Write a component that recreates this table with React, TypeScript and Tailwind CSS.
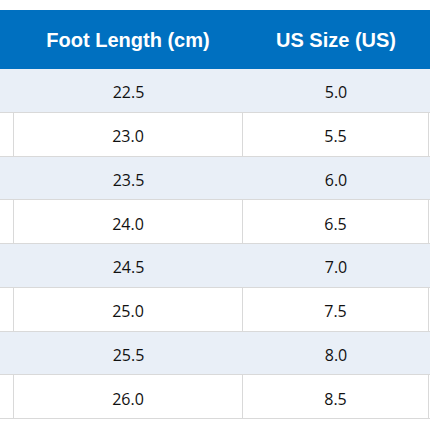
import React from "react";

const rows = [
  ["22.5", "5.0"],
  ["23.0", "5.5"],
  ["23.5", "6.0"],
  ["24.0", "6.5"],
  ["24.5", "7.0"],
  ["25.0", "7.5"],
  ["25.5", "8.0"],
  ["26.0", "8.5"],
];

export default function App() {
  return (
    <div className="w-[430px] h-[430px] bg-white overflow-hidden pt-[10px]">
      <div className="flex h-[59px] bg-[#0070c0] text-white font-bold text-[20px] font-['Liberation_Sans',Arial,sans-serif]">
        <div className="w-[13px]" />
        <div className="w-[230px] flex items-center justify-center">Foot Length (cm)</div>
        <div className="w-[186px] flex items-center justify-center">US Size (US)</div>
        <div className="flex-1" />
      </div>
      {rows.map((r, i) => (
        <div
          key={i}
          className={`flex h-[43.75px] border-b border-[#d9d9d9] text-[16px] text-[#111] font-['Open_Sans',sans-serif] ${
            i % 2 === 0 ? "bg-[#e9eff7]" : "bg-white"
          }`}
        >
          <div className={`w-[14px] ${i % 2 === 0 ? "" : "border-r border-[#d9d9d9]"}`} />
          <div className={`w-[229px] flex items-center justify-center pt-[4px] ${i % 2 === 0 ? "" : "border-r border-[#d9d9d9]"}`}>{r[0]}</div>
          <div className={`w-[186px] flex items-center justify-center pt-[4px] ${i % 2 === 0 ? "" : "border-r border-[#d9d9d9]"}`}>{r[1]}</div>
          <div className="flex-1" />
        </div>
      ))}
    </div>
  );
}
